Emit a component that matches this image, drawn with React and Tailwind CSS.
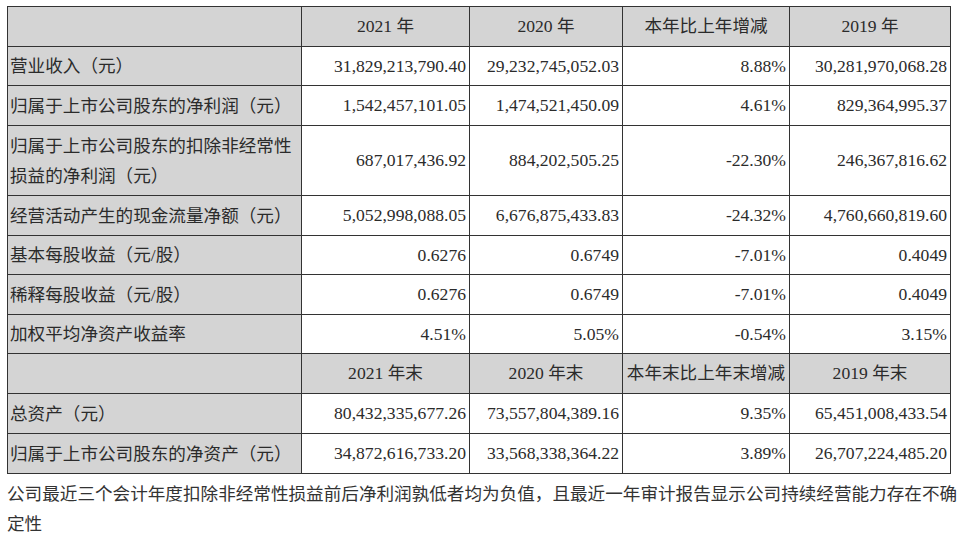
const headerA = ['2021 年', '2020 年', '本年比上年增减', '2019 年']
const headerB = ['2021 年末', '2020 年末', '本年末比上年末增减', '2019 年末']

const rowsA = [
  { label: '营业收入（元）', h: 'h-[39px]', v: ['31,829,213,790.40', '29,232,745,052.03', '8.88%', '30,281,970,068.28'] },
  { label: '归属于上市公司股东的净利润（元）', h: 'h-[40px]', v: ['1,542,457,101.05', '1,474,521,450.09', '4.61%', '829,364,995.37'] },
  {
    label: (
      <>
        归属于上市公司股东的扣除非经常性
        <br />
        损益的净利润（元）
      </>
    ),
    h: 'h-[70px]',
    v: ['687,017,436.92', '884,202,505.25', '-22.30%', '246,367,816.62'],
  },
  { label: '经营活动产生的现金流量净额（元）', h: 'h-[40px]', v: ['5,052,998,088.05', '6,676,875,433.83', '-24.32%', '4,760,660,819.60'] },
  { label: '基本每股收益（元/股）', h: 'h-[39px]', v: ['0.6276', '0.6749', '-7.01%', '0.4049'] },
  { label: '稀释每股收益（元/股）', h: 'h-[40px]', v: ['0.6276', '0.6749', '-7.01%', '0.4049'] },
  { label: '加权平均净资产收益率', h: 'h-[39px]', v: ['4.51%', '5.05%', '-0.54%', '3.15%'] },
]

const rowsB = [
  { label: '总资产（元）', h: 'h-[40px]', v: ['80,432,335,677.26', '73,557,804,389.16', '9.35%', '65,451,008,433.54'] },
  { label: '归属于上市公司股东的净资产（元）', h: 'h-[40px]', v: ['34,872,616,733.20', '33,568,338,364.22', '3.89%', '26,707,224,485.20'] },
]

const cell = 'border-[1.5px] border-[#333] align-middle'

function HeaderRow({ items }) {
  return (
    <tr className="h-[40px] bg-[#d4d4d4]">
      <td className={cell} />
      {items.map((t) => (
        <td key={t} className={`${cell} text-center whitespace-nowrap`}>
          {t}
        </td>
      ))}
    </tr>
  )
}

function DataRow({ row }) {
  return (
    <tr className={row.h}>
      <td className={`${cell} bg-[#d4d4d4] pl-[2px] leading-[30px]`}>{row.label}</td>
      {row.v.map((t, i) => (
        <td key={i} className={`${cell} bg-white text-right pr-[3px] whitespace-nowrap`}>
          {t}
        </td>
      ))}
    </tr>
  )
}

export default function App() {
  return (
    <div
      className="w-[974px] h-[542px] bg-white pt-[6px] pl-[7px] text-[17.6px] text-[#2b2b2b]"
      style={{ fontFamily: '"Liberation Serif", "Noto Sans CJK SC", serif' }}
    >
      <table className="table-fixed border-collapse w-[943px]">
        <colgroup>
          <col className="w-[294px]" />
          <col className="w-[168px]" />
          <col className="w-[153px]" />
          <col className="w-[167px]" />
          <col className="w-[161px]" />
        </colgroup>
        <tbody>
          <HeaderRow items={headerA} />
          {rowsA.map((r, i) => (
            <DataRow key={i} row={r} />
          ))}
          <HeaderRow items={headerB} />
          {rowsB.map((r, i) => (
            <DataRow key={i} row={r} />
          ))}
        </tbody>
      </table>
      <p className="mt-[5px] w-[960px] leading-[30px] text-[#333]">
        公司最近三个会计年度扣除非经常性损益前后净利润孰低者均为负值，且最近一年审计报告显示公司持续经营能力存在不确定性
      </p>
    </div>
  )
}
